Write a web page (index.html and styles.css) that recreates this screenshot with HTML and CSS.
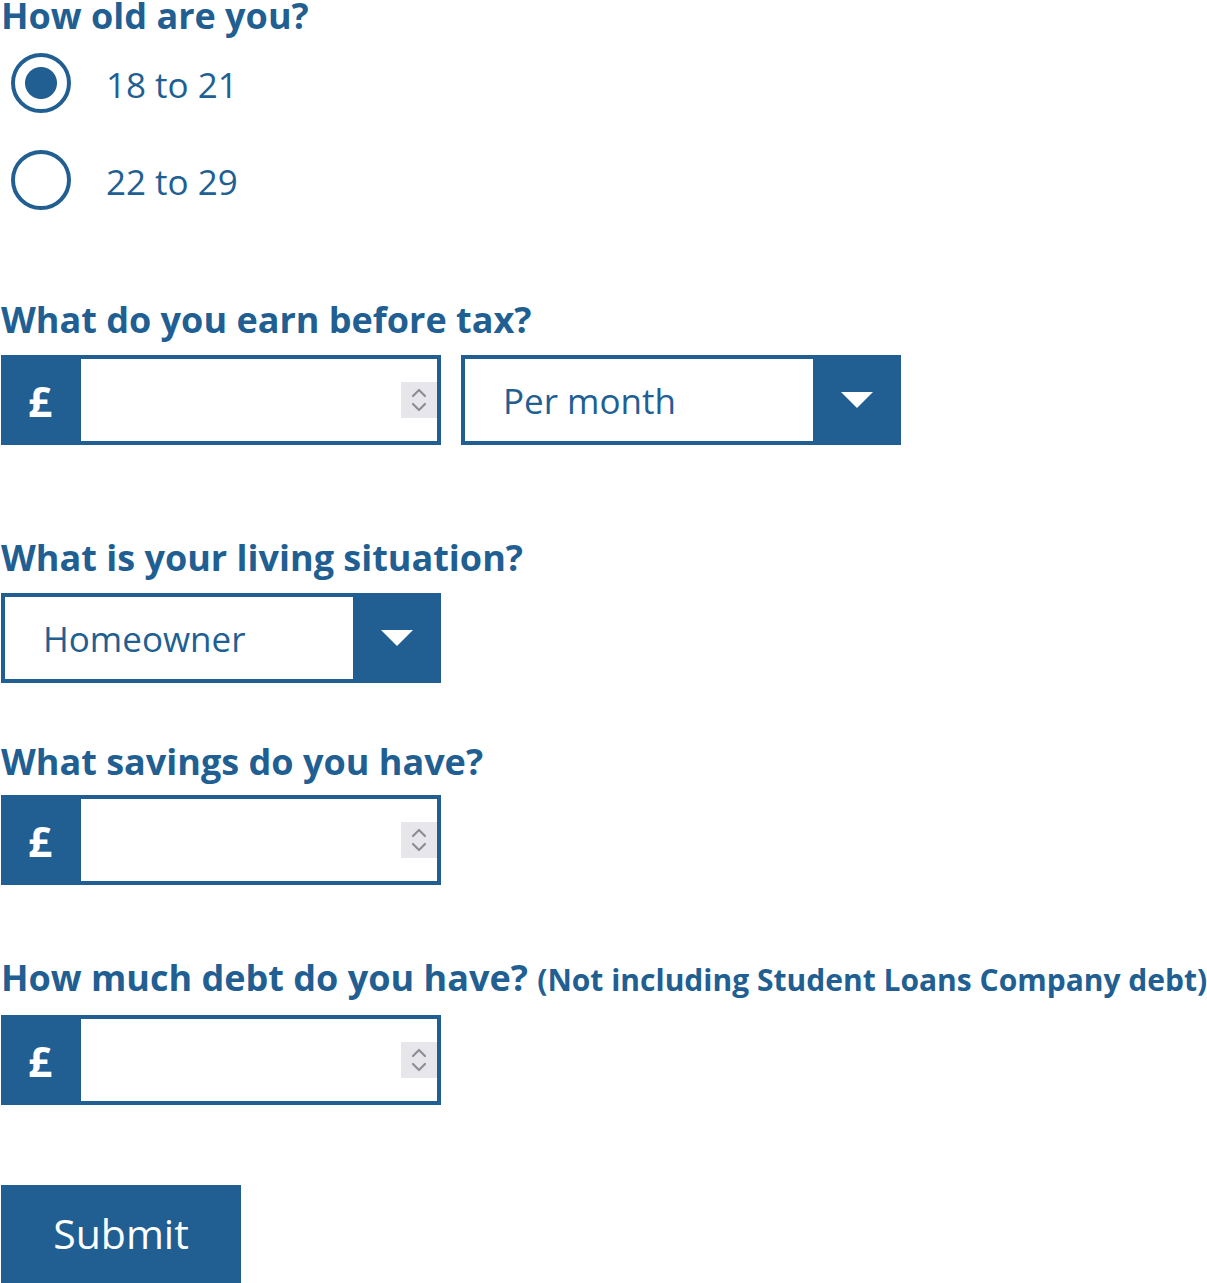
FILE: index.html
```html
<!DOCTYPE html>
<html lang="en">
<head>
<meta charset="utf-8">
<title>Budget form</title>
<link rel="stylesheet" href="styles.css">
</head>
<body>
<form class="form">
  <fieldset class="group group-age">
    <legend class="q q-first">How old are you?</legend>
    <label class="radio-row">
      <input type="radio" name="age" class="radio" checked>
      <span class="radio-label">18 to 21</span>
    </label>
    <label class="radio-row">
      <input type="radio" name="age" class="radio">
      <span class="radio-label">22 to 29</span>
    </label>
  </fieldset>

  <div class="group group-earn">
    <h2 class="q">What do you earn before tax?</h2>
    <div class="row">
      <div class="money">
        <span class="prefix">£</span>
        <input type="number" class="money-input" aria-label="Earnings">
        <span class="spin"><svg width="16" height="28" viewBox="0 0 16 28"><path d="M2 10 L8 4 L14 10 M2 18 L8 24 L14 18" fill="none" stroke="#8e8d96" stroke-width="2.2" stroke-linecap="round" stroke-linejoin="round"/></svg></span>
      </div>
      <div class="select">
        <select class="select-field"><option>Per month</option><option>Per year</option></select>
        <span class="select-btn"><span class="tri"></span></span>
      </div>
    </div>
  </div>

  <div class="group group-living">
    <h2 class="q">What is your living situation?</h2>
    <div class="select">
      <select class="select-field"><option>Homeowner</option><option>Renting</option></select>
      <span class="select-btn"><span class="tri"></span></span>
    </div>
  </div>

  <div class="group group-savings">
    <h2 class="q">What savings do you have?</h2>
    <div class="money">
      <span class="prefix">£</span>
      <input type="number" class="money-input" aria-label="Savings">
      <span class="spin"><svg width="16" height="28" viewBox="0 0 16 28"><path d="M2 10 L8 4 L14 10 M2 18 L8 24 L14 18" fill="none" stroke="#8e8d96" stroke-width="2.2" stroke-linecap="round" stroke-linejoin="round"/></svg></span>
    </div>
  </div>

  <div class="group group-debt">
    <h2 class="q">How much debt do you have? <small class="note">(Not including Student Loans Company debt)</small></h2>
    <div class="money">
      <span class="prefix">£</span>
      <input type="number" class="money-input" aria-label="Debt">
      <span class="spin"><svg width="16" height="28" viewBox="0 0 16 28"><path d="M2 10 L8 4 L14 10 M2 18 L8 24 L14 18" fill="none" stroke="#8e8d96" stroke-width="2.2" stroke-linecap="round" stroke-linejoin="round"/></svg></span>
    </div>
  </div>

  <button type="button" class="submit">Submit</button>
</form>
</body>
</html>
```

FILE: styles.css
```css
* { box-sizing: border-box; }
html, body { margin: 0; padding: 0; background: #fff; }
body {
  font-family: "Open Sans", "Liberation Sans", sans-serif;
  color: #215f93;
  padding: 0 1px;
}
.form { display: flex; flex-direction: column; align-items: flex-start; }
.group { border: 0; margin: 0; padding: 0; min-width: 0; display: flex; flex-direction: column; align-items: flex-start; }
.q {
  margin: 0;
  font-size: 36px;
  line-height: 44px;
  font-weight: 700;
  color: #215f93;
  padding: 0;
  white-space: nowrap;
}
.q-first { line-height: 30px; float: left; width: 100%; padding-top: 1px; }
.note { font-size: 30px; font-weight: 700; }

.radio-row { display: flex; align-items: center; gap: 35px; margin-left: 10px; margin-top: 37px; cursor: pointer; }
.group-age .radio-row:first-of-type { margin-top: 22px; }
.radio {
  -webkit-appearance: none; appearance: none;
  margin: 0;
  width: 60px; height: 60px;
  border: 4px solid #215f93;
  border-radius: 50%;
  background: #fff;
  flex: none;
}
.radio:checked { background: radial-gradient(circle, #215f93 0 15.5px, #fff 16.5px); }
.radio-label { font-size: 35px; line-height: 44px; color: #215f93; padding-top: 4px; }

.group-earn { margin-top: 88px; }
.group-living { margin-top: 91px; }
.group-savings { margin-top: 55px; }
.group-debt { margin-top: 71px; }
.group .q + .row, .group .q + .money, .group .q + .select { margin-top: 13px; }
.group-savings .q { margin-top: 2px; }
.group-savings .q + .money { margin-top: 11px; }

.row { display: flex; gap: 20px; }
.money {
  display: flex; align-items: center;
  width: 440px; height: 90px;
  border: 4px solid #215f93;
  background: #fff;
}
.prefix {
  align-self: stretch;
  width: 80px; margin: -4px 0 -4px -4px; padding-right: 2px;
  background: #215f93; color: #fff;
  display: flex; align-items: center; justify-content: center;
  font-size: 42px; font-weight: 700;
  flex: none;
}
.money-input {
  flex: 1; min-width: 0; height: 100%;
  border: 0; outline: 0; padding: 0 16px;
  font: inherit; font-size: 35px; color: #215f93; background: transparent;
  -moz-appearance: textfield;
}
.money-input::-webkit-outer-spin-button,
.money-input::-webkit-inner-spin-button { -webkit-appearance: none; margin: 0; }
.spin {
  flex: none; width: 36px; height: 36px;
  background: #e7e6eb;
  display: flex; align-items: center; justify-content: center;
}

.select {
  display: flex;
  width: 440px; height: 90px;
  border: 4px solid #215f93;
  background: #fff;
}
.select-field {
  -webkit-appearance: none; appearance: none;
  flex: 1; min-width: 0;
  border: 0; outline: 0; border-radius: 0;
  background: #fff;
  font: inherit; font-size: 35px; color: #215f93;
  padding: 0 0 0 38px;
  margin: 0;
}
.select-btn {
  flex: none; width: 88px;
  margin: -4px -4px -4px 0;
  background: #215f93;
  display: flex; align-items: center; justify-content: center;
}
.tri {
  width: 0; height: 0;
  border-left: 16px solid transparent;
  border-right: 16px solid transparent;
  border-top: 16px solid #fff;
  margin-left: -1px;
}

.submit {
  margin-top: 80px;
  width: 240px; height: 100px;
  border: 0; border-radius: 0;
  background: #215f93; color: #fff;
  font-family: "Open Sans", "Liberation Sans", sans-serif;
  font-size: 41px; font-weight: 400;
  padding: 0 0 4px;
  cursor: pointer;
}
```
